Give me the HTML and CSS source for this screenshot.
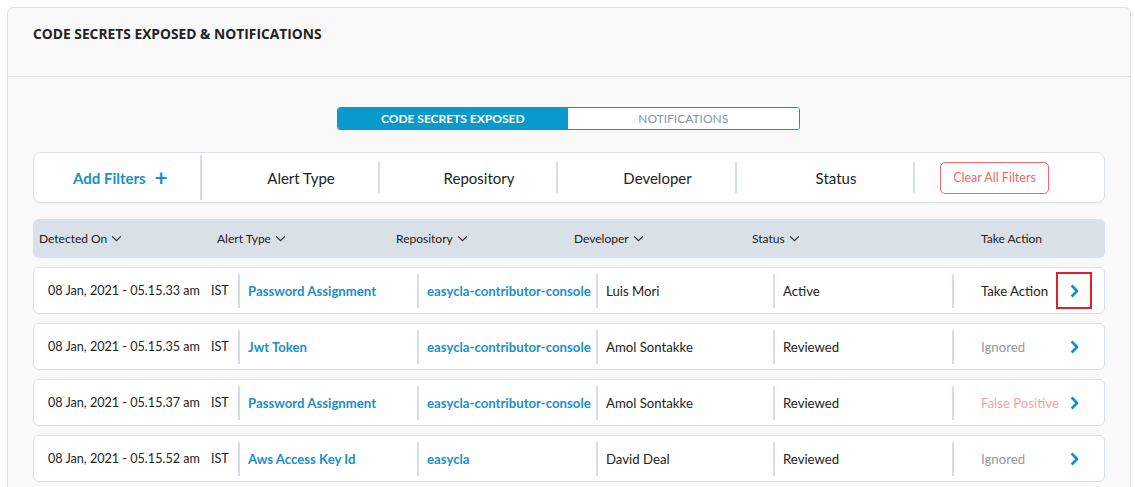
FILE: index.html
```html
<!DOCTYPE html>
<html>
<head>
<meta charset="utf-8">
<link rel="stylesheet" href="styles.css">
</head>
<body>
<div class="page">
  <section class="card">
    <header class="card-head">
      <h1 class="title">CODE SECRETS EXPOSED &amp; NOTIFICATIONS</h1>
    </header>
    <div class="card-body">
      <div class="toggle">
        <button class="tab tab-active">CODE SECRETS EXPOSED</button>
        <button class="tab">NOTIFICATIONS</button>
      </div>

      <div class="filters">
        <div class="f-add">Add Filters <span class="plus">+</span></div>
        <div class="f-item">Alert Type</div>
        <div class="f-item">Repository</div>
        <div class="f-item">Developer</div>
        <div class="f-item">Status</div>
        <div class="f-clear"><button class="clear-btn">Clear All Filters</button></div>
      </div>

      <div class="thead">
        <div class="th">Detected On <svg class="caret" viewBox="0 0 12 8"><path d="M1 1.5l5 5 5-5" fill="none" stroke="#333" stroke-width="1.4"/></svg></div>
        <div class="th">Alert Type <svg class="caret" viewBox="0 0 12 8"><path d="M1 1.5l5 5 5-5" fill="none" stroke="#333" stroke-width="1.4"/></svg></div>
        <div class="th">Repository <svg class="caret" viewBox="0 0 12 8"><path d="M1 1.5l5 5 5-5" fill="none" stroke="#333" stroke-width="1.4"/></svg></div>
        <div class="th">Developer <svg class="caret" viewBox="0 0 12 8"><path d="M1 1.5l5 5 5-5" fill="none" stroke="#333" stroke-width="1.4"/></svg></div>
        <div class="th">Status <svg class="caret" viewBox="0 0 12 8"><path d="M1 1.5l5 5 5-5" fill="none" stroke="#333" stroke-width="1.4"/></svg></div>
        <div class="th th-action">Take Action</div>
      </div>

      <div class="rows">
        <div class="row">
          <div class="td td-date"><span>08 Jan, 2021 - 05.15.33 am</span><span class="tz">IST</span></div>
          <div class="td sep link">Password Assignment</div>
          <div class="td sep link">easycla-contributor-console</div>
          <div class="td sep">Luis Mori</div>
          <div class="td sep">Active</div>
          <div class="td sep td-act"><span class="act">Take Action</span><span class="chev chev-hl"><svg viewBox="0 0 8 13"><path d="M1.6 1.4l5 5.1-5 5.1" fill="none" stroke="#1a8fc9" stroke-width="2.6"/></svg></span></div>
        </div>
        <div class="row">
          <div class="td td-date"><span>08 Jan, 2021 - 05.15.35 am</span><span class="tz">IST</span></div>
          <div class="td sep link">Jwt Token</div>
          <div class="td sep link">easycla-contributor-console</div>
          <div class="td sep">Amol Sontakke</div>
          <div class="td sep">Reviewed</div>
          <div class="td sep td-act"><span class="act act-ignored">Ignored</span><span class="chev"><svg viewBox="0 0 8 13"><path d="M1.6 1.4l5 5.1-5 5.1" fill="none" stroke="#1a8fc9" stroke-width="2.6"/></svg></span></div>
        </div>
        <div class="row">
          <div class="td td-date"><span>08 Jan, 2021 - 05.15.37 am</span><span class="tz">IST</span></div>
          <div class="td sep link">Password Assignment</div>
          <div class="td sep link">easycla-contributor-console</div>
          <div class="td sep">Amol Sontakke</div>
          <div class="td sep">Reviewed</div>
          <div class="td sep td-act"><span class="act act-false">False Positive</span><span class="chev"><svg viewBox="0 0 8 13"><path d="M1.6 1.4l5 5.1-5 5.1" fill="none" stroke="#1a8fc9" stroke-width="2.6"/></svg></span></div>
        </div>
        <div class="row">
          <div class="td td-date"><span>08 Jan, 2021 - 05.15.52 am</span><span class="tz">IST</span></div>
          <div class="td sep link">Aws Access Key Id</div>
          <div class="td sep link">easycla</div>
          <div class="td sep">David Deal</div>
          <div class="td sep">Reviewed</div>
          <div class="td sep td-act"><span class="act act-ignored">Ignored</span><span class="chev"><svg viewBox="0 0 8 13"><path d="M1.6 1.4l5 5.1-5 5.1" fill="none" stroke="#1a8fc9" stroke-width="2.6"/></svg></span></div>
        </div>
      </div>
    </div>
  </section>
</div>
</body>
</html>
```

FILE: styles.css
```css
* { box-sizing: border-box; }
html, body { margin: 0; padding: 0; background: #fff; }
body { font-family: Lato, "Open Sans", sans-serif; color: #222; overflow: hidden; }

.page { padding: 7px 4px 0 7px; height: 487px; }

.card {
  width: 1124px;
  height: 520px;
  background: #f9f9f9;
  border: 1px solid #e0e0e0;
  border-radius: 6px;
}

.card-head {
  height: 69px;
  border-bottom: 1px solid #e0e0e0;
  padding: 16px 25px 0;
}
.title {
  margin: 0;
  font-family: "Open Sans", sans-serif;
  font-weight: 700;
  font-size: 13.8px;
  color: #222;
  letter-spacing: 0;
}

.card-body { padding: 30px 25px 0; }

.toggle {
  display: flex;
  width: 463px;
  height: 23px;
  margin: 0 auto;
  border: 1px solid #0a99cb;
  border-radius: 3px;
  overflow: hidden;
  background: #fff;
  position: relative;
  left: -1px;
}
.tab {
  flex: 1;
  border: 0;
  background: #fff;
  font-family: Lato, sans-serif;
  font-size: 12px;
  color: #8c95a3;
  padding: 0;
  line-height: 21px;
}
.tab-active {
  background: #0a99cb;
  color: #fff;
  font-weight: 700;
}

.filters {
  margin-top: 22px;
  height: 51px;
  background: #fff;
  border: 1px solid #dde2e9;
  border-radius: 8px;
  display: grid;
  grid-template-columns: 168px 176px 178px 179px 178px 1fr;
  align-items: center;
  box-shadow: 0 1px 2px rgba(0,0,0,0.04);
}
.f-add {
  padding-left: 39px;
  font-weight: 700;
  font-size: 15px;
  color: #1a8fc9;
  display: flex;
  align-items: center;
  border-right: 2px solid #d7dde5;
  height: 45px;
}
.plus { font-size: 22px; margin-left: 9px; font-weight: 700; line-height: 1; }
.f-item {
  border-left: 2px solid #d7dde5;
  height: 31px;
  display: flex;
  align-items: center;
  justify-content: center;
  padding-left: 22px;
  font-size: 15px;
  color: #222;
}
.f-add + .f-item { border-left: 0; }
.f-clear { border-left: 2px solid #d7dde5; height: 31px; display: flex; align-items: center; padding-left: 25px; }
.clear-btn {
  height: 32px;
  width: 109px;
  border: 1px solid #f06868;
  border-radius: 5px;
  background: #fff;
  color: #f06868;
  font-family: Lato, sans-serif;
  font-size: 12.5px;
  padding: 0;
}

.thead {
  margin-top: 16px;
  height: 39px;
  background: #dae0e8;
  border-radius: 6px;
  display: grid;
  grid-template-columns: 178px 179px 178px 178px 229px 1fr;
  align-items: center;
  padding-left: 6px;
}
.th { font-size: 12px; color: #222; display: flex; align-items: center; }
.caret { width: 11px; height: 7px; margin-left: 4px; }

.rows { margin-top: 9px; display: flex; flex-direction: column; gap: 9px; }
.row {
  height: 47px;
  background: #fff;
  border: 1px solid #dbe1e8;
  border-radius: 6px;
  display: grid;
  grid-template-columns: 204px 179px 179px 177px 179px 1fr;
  align-items: center;
}
.td {
  font-size: 13.2px;
  color: #222;
  white-space: nowrap;
  height: 34px;
  display: flex;
  align-items: center;
}
.td-date { padding-left: 14px; font-size: 12.6px; }
.tz { margin-left: 11px; }
.sep { border-left: 2px solid #d7dde5; padding-left: 8px; }
.link { color: #1a8fc9; font-weight: 700; }
.td-act { padding-left: 27px; position: relative; }
.act { width: 78px; }
.act-ignored { color: #999; }
.act-false { color: #f5a3a3; }
.chev { display: flex; align-items: center; justify-content: center; width: 36px; height: 37px; margin-left: -3px; }
.chev svg { width: 8.5px; height: 14px; }
.chev-hl { border: 2px solid #e3202a; }
```
